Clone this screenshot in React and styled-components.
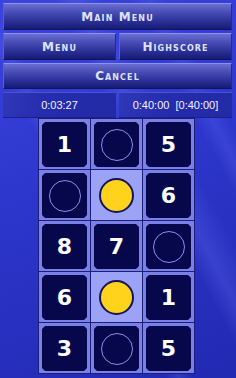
import React from "react";
import styled, { createGlobalStyle } from "styled-components";

const GlobalStyle = createGlobalStyle`
  html, body {
    margin: 0;
    padding: 0;
    width: 236px;
    height: 378px;
    overflow: hidden;
  }
  body {
    background-color: #2c34c6;
    background-image:
      linear-gradient(62deg, transparent 38%, rgba(120, 130, 255, 0.18) 41%, transparent 44%),
      linear-gradient(62deg, transparent 58%, rgba(120, 130, 255, 0.22) 63%, transparent 70%),
      linear-gradient(62deg, transparent 76%, rgba(110, 120, 255, 0.2) 80%, transparent 84%),
      linear-gradient(160deg, #3a44de 0%, #2d36cc 45%, #2229b2 100%);
  }
`;

const Screen = styled.div`
  width: 236px;
  height: 378px;
  display: flex;
  flex-direction: column;
  padding: 3px 4px 0 3px;
  box-sizing: border-box;
`;

const Row = styled.div`
  display: flex;
  gap: 3px;
  margin-bottom: ${(p) => p.$mb ?? 3}px;
`;

const Button = styled.div`
  flex: 1;
  height: ${(p) => p.$h ?? 27}px;
  box-sizing: border-box;
  display: flex;
  align-items: center;
  justify-content: center;
  background: linear-gradient(180deg, #6a6fd0 0%, #4a50b8 30%, #2a2f96 70%, #161b74 100%);
  border-top: 1px solid #8d93e6;
  border-left: 1px solid #5a60c4;
  border-right: 1px solid #232a90;
  border-bottom: 1px solid #10145e;
  font-family: "DejaVu Sans", sans-serif;
  font-weight: bold;
  font-size: 12px;
  font-variant: small-caps;
  letter-spacing: 1.1px;
  color: #dfe2fc;
`;

const TimeBox = styled.div`
  flex: 1;
  height: 26px;
  box-sizing: border-box;
  display: flex;
  align-items: center;
  justify-content: center;
  background: linear-gradient(110deg, #3038b8 0%, #252cae 40%, #232aa4 100%);
  border-top: 1px solid #4a52d0;
  border-bottom: 1px solid #1a2088;
  font-family: "Liberation Sans", Arial, sans-serif;
  font-size: 11px;
  color: #f2f3ff;
  white-space: pre;
`;

const Board = styled.div`
  align-self: center;
  margin-right: 2px;
  display: grid;
  grid-template-columns: repeat(3, 51px);
  grid-template-rows: repeat(5, 50px);
  gap: 1px;
  padding: 1px;
  background: #1c1f78;
`;

const Tile = styled.div`
  box-sizing: border-box;
  padding: 3px 3px 2px 3px;
  background: ${(p) => (p.$lit ? "#9ca2f6" : "#7b80e6")};
  display: flex;
`;

const Cell = styled.div`
  flex: 1;
  display: flex;
  align-items: center;
  justify-content: center;
  background: #07074c;
  border-radius: 4px;
  box-shadow: 0 0 0 1px #5257c8;
  clip-path: polygon(3px 0, calc(100% - 3px) 0, 100% 3px, 100% calc(100% - 3px), calc(100% - 3px) 100%, 3px 100%, 0 calc(100% - 3px), 0 3px);
  font-family: "DejaVu Sans", Verdana, sans-serif;
  font-weight: bold;
  font-size: 22px;
  color: #ffffff;
`;

const LitCell = styled.div`
  flex: 1;
  display: flex;
  align-items: center;
  justify-content: center;
`;

const Ring = styled.div`
  width: 32px;
  height: 32px;
  border-radius: 50%;
  border: 1px solid #8a8fe8;
  box-sizing: border-box;
`;

const Coin = styled.div`
  width: 35px;
  height: 35px;
  border-radius: 50%;
  background: #ffd21c;
  border: 2px solid #14145a;
  box-sizing: border-box;
`;

const board = [
  ["1", "o", "5"],
  ["o", "*", "6"],
  ["8", "7", "o"],
  ["6", "*", "1"],
  ["3", "o", "5"],
];

const renderTile = (v, key) => {
  if (v === "*") {
    return (
      <Tile key={key} $lit>
        <LitCell>
          <Coin />
        </LitCell>
      </Tile>
    );
  }
  return (
    <Tile key={key}>
      <Cell>{v === "o" ? <Ring /> : v}</Cell>
    </Tile>
  );
};

export default function App() {
  return (
    <>
      <GlobalStyle />
      <Screen>
        <Row>
          <Button>Main Menu</Button>
        </Row>
        <Row>
          <Button>Menu</Button>
          <Button>Highscore</Button>
        </Row>
        <Row $mb={3}>
          <Button $h={26}>Cancel</Button>
        </Row>
        <Row $mb={0}>
          <TimeBox>0:03:27</TimeBox>
          <TimeBox>0:40:00  [0:40:00]</TimeBox>
        </Row>
        <Board>
          {board.flatMap((row, r) => row.map((v, c) => renderTile(v, `${r}-${c}`)))}
        </Board>
      </Screen>
    </>
  );
}
